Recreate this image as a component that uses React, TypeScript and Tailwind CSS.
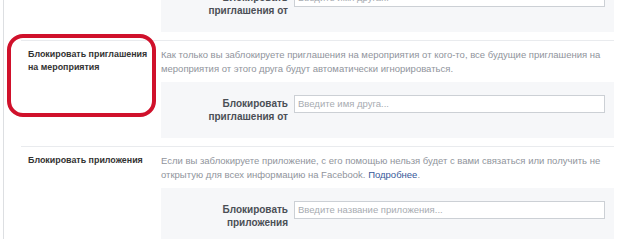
import React from "react";

function GrayBox({ label, placeholder }: { label: [string, string]; placeholder: string }) {
  return (
    <div className="h-[56px] bg-[#f6f7f9] flex items-start pt-[13px]">
      <div className="w-[127px] shrink-0 text-right pt-[2px] text-[10px] leading-[13px] font-bold text-[#4b4f56]">
        <div>{label[0]}</div>
        <div>{label[1]}</div>
      </div>
      <div className="ml-[6px] w-[311px] h-[18px] bg-white border border-[#ccd0d5] flex items-center pl-[3px] text-[9.5px] text-[#a7abb1]">
        {placeholder}
      </div>
    </div>
  );
}

export default function App() {
  return (
    <div className="relative w-[620px] h-[239px] overflow-hidden bg-white font-['Liberation_Sans',Arial,sans-serif]">
      <div className="ml-[3px] border-l border-[#dddfe2] h-[300px] -mt-[24px] pl-[17px] pr-[6px]">
        {/* partial top row */}
        <div className="flex pb-[8px] border-b border-[#e9ebee]">
          <div className="w-[140px] shrink-0" />
          <div className="flex-1">
            <GrayBox label={["Блокировать", "приглашения от"]} placeholder="Введите имя друга..." />
          </div>
        </div>

        {/* events row */}
        <div className="flex pt-[7px] pb-[8px] border-b border-[#e9ebee]">
          <div className="w-[140px] shrink-0 pl-[7px] text-[8.9px] leading-[13px] font-bold text-[#333333]">
            Блокировать приглашения
            <br />
            на мероприятия
          </div>
          <div className="flex-1">
            <div className="text-[9.5px] leading-[14px] text-[#90949c]">
              Как только вы заблокируете приглашения на мероприятия от кого-то, все будущие приглашения на
              <br />
              мероприятия от этого друга будут автоматически игнорироваться.
            </div>
            <div className="mt-[6px]">
              <GrayBox label={["Блокировать", "приглашения от"]} placeholder="Введите имя друга..." />
            </div>
          </div>
        </div>

        {/* apps row */}
        <div className="flex pt-[7px] pb-[8px]">
          <div className="w-[140px] shrink-0 pl-[7px] text-[8.9px] leading-[13px] font-bold text-[#333333]">
            Блокировать приложения
          </div>
          <div className="flex-1">
            <div className="text-[9.5px] leading-[14px] text-[#90949c]">
              Если вы заблокируете приложение, с его помощью нельзя будет с вами связаться или получить не
              <br />
              открытую для всех информацию на Facebook.{" "}
              <span className="text-[#365899]">Подробнее</span>.
            </div>
            <div className="mt-[6px]">
              <GrayBox label={["Блокировать", "приложения"]} placeholder="Введите название приложения..." />
            </div>
          </div>
        </div>
      </div>

      {/* red highlight annotation */}
      <div className="absolute left-[7px] top-[34px] w-[149px] h-[83px] border-[4px] border-[#d0112b] rounded-[16px]" />
    </div>
  );
}
